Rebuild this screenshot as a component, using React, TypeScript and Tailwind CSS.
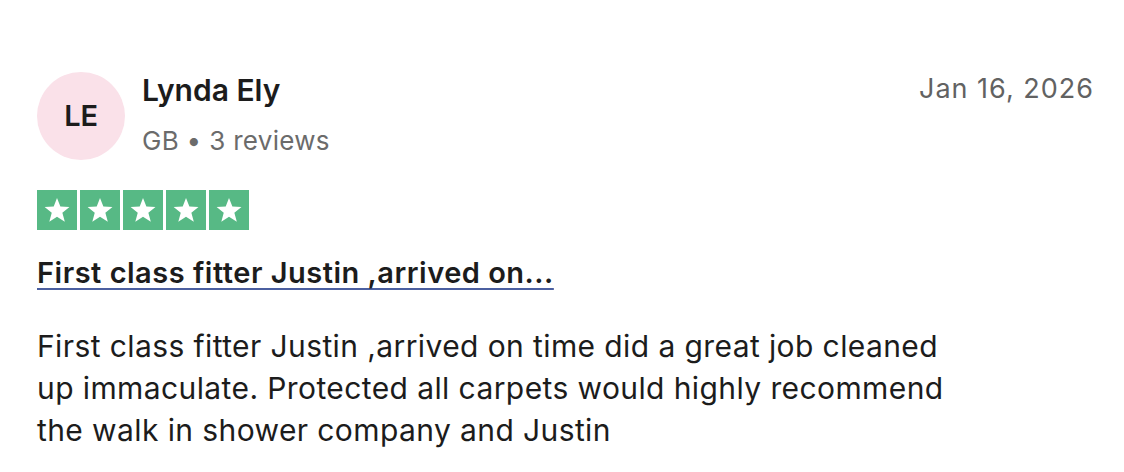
import * as React from "react"

/**
 * Single review card, Trustpilot style
 */

function Star() {
  return (
    <div className="flex h-10 w-10 items-center justify-center bg-[#57b985]">
      <svg viewBox="0 0 24 24" className="h-[28px] w-[28px]" fill="#fff">
        <path d="M12 1.8l2.9 7.3 7.8.4-6.1 4.9 2.1 7.6L12 17.7l-6.6 4.3 2.1-7.6-6.1-4.9 7.8-.4z" />
      </svg>
    </div>
  )
}

export default function App() {
  return (
    <div className="min-h-[472px] bg-white pl-[37px] pr-[30px] pt-[72px] font-['Inter',sans-serif] text-[#1c1c1c]">
      {/* Header */}
      <div className="flex items-start justify-between">
        <div className="flex items-start gap-[17px]">
          <div className="flex h-[88px] w-[88px] items-center justify-center rounded-full bg-[#fae1e9] text-[29px] font-semibold tracking-[-0.3px]">
            LE
          </div>
          <div className="flex flex-col">
            <span className="text-[30px] font-semibold leading-[36px]">Lynda Ely</span>
            <span className="mt-[15px] text-[26px] leading-[36px] tracking-[0.3px] text-[#6b6b6b]">GB • 3 reviews</span>
          </div>
        </div>
        <span className="-mt-px text-[27px] leading-[36px] tracking-[1px] text-[#626262]">Jan 16, 2026</span>
      </div>

      {/* Rating */}
      <div className="mt-[30px] flex gap-[3px]">
        {Array.from({ length: 5 }).map((_, i) => (
          <Star key={i} />
        ))}
      </div>

      {/* Title */}
      <h2 className="mt-[22px] text-[29px] font-semibold leading-[42px] tracking-[0.5px]">
        <a href="#" className="underline decoration-[#4b5fa0] decoration-2 underline-offset-[5px]">
          First class fitter Justin ,arrived on...
        </a>
      </h2>

      {/* Body */}
      <p className="mt-[31px] text-[30px] leading-[42px] tracking-[0.4px]">
        First class fitter Justin ,arrived on time did a great job cleaned
        <br />
        up immaculate. Protected all carpets would highly recommend
        <br />
        the walk in shower company and Justin
      </p>
    </div>
  )
}
